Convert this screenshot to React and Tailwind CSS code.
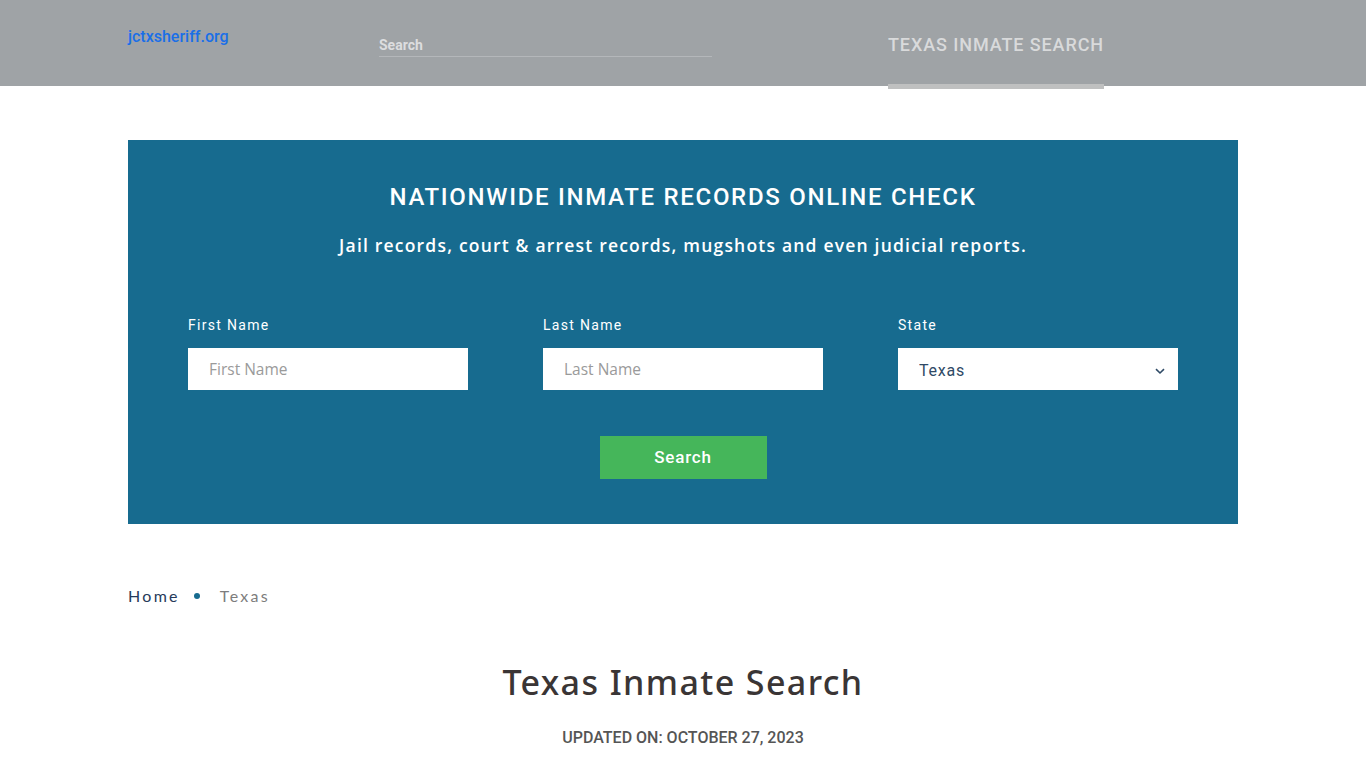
import React, { useState } from 'react';

function Header() {
  return (
    <header className="h-[86px] bg-[#9fa3a6]">
      <div className="mx-auto flex h-full w-[1110px] items-start">
        <a href="#" className="mt-[25px] w-[251px] font-['Roboto'] text-[16px] font-medium text-[#1a6fe8]">
          jctxsheriff.org
        </a>
        <div className="mt-[32px] w-[333px] border-b border-[#b4b7ba] pb-0">
          <input
            className="w-full bg-transparent font-['Roboto'] text-[14px] font-bold leading-[22px] text-[#dcdddf] placeholder-[#dcdddf] outline-none"
            placeholder="Search"
          />
        </div>
        <nav className="ml-[176px] flex h-full flex-col">
          <a href="#" className="mt-[31px] font-['Roboto'] text-[18px] font-medium tracking-[0.9px] text-[#d9dadb]">
            TEXAS INMATE SEARCH
          </a>
          <div className="mt-auto h-[5px] translate-y-[3px] bg-[#bfc0c0]" />
        </nav>
      </div>
    </header>
  );
}

function SearchPanel() {
  const [first, setFirst] = useState('');
  const [last, setLast] = useState('');

  return (
    <section className="mx-auto mt-[54px] w-[1110px] bg-[#176b8f] px-[60px] pb-[45px] pt-[39px]">
      <h2 className="text-center font-['Roboto'] text-[24px] font-medium tracking-[1.7px] text-white">
        NATIONWIDE INMATE RECORDS ONLINE CHECK
      </h2>
      <p className="mt-[17px] text-center font-['Open_Sans'] text-[17.5px] font-semibold tracking-[1.2px] text-white">
        Jail records, court &amp; arrest records, mugshots and even judicial reports.
      </p>

      <div className="mt-[57px] grid grid-cols-3 gap-x-[75px]">
        <div>
          <label className="block font-['Roboto'] text-[14px] tracking-[1.3px] text-white">First Name</label>
          <input
            value={first}
            onChange={(e) => setFirst(e.target.value)}
            placeholder="First Name"
            className="mt-[12px] h-[42px] w-[280px] bg-white px-[21px] font-['Open_Sans'] text-[15.5px] text-[#333] placeholder-[#9a9a9a] outline-none"
          />
        </div>
        <div>
          <label className="block font-['Roboto'] text-[14px] tracking-[1.3px] text-white">Last Name</label>
          <input
            value={last}
            onChange={(e) => setLast(e.target.value)}
            placeholder="Last Name"
            className="mt-[12px] h-[42px] w-[280px] bg-white px-[21px] font-['Open_Sans'] text-[15.5px] text-[#333] placeholder-[#9a9a9a] outline-none"
          />
        </div>
        <div>
          <label className="block font-['Roboto'] text-[14px] tracking-[1.3px] text-white">State</label>
          <div className="relative mt-[12px] h-[42px] w-[280px] bg-white">
            <select className="h-full w-full appearance-none bg-transparent px-[21px] pt-[4px] font-['Roboto'] text-[16px] tracking-[0.8px] text-[#2f4a66] outline-none">
              <option>Texas</option>
            </select>
            <svg className="pointer-events-none absolute right-[13px] top-[20px]" width="10" height="7" viewBox="0 0 10 7">
              <path d="M1 1.2 L5 5 L9 1.2" fill="none" stroke="#2f4a66" strokeWidth="1.6" />
            </svg>
          </div>
        </div>
      </div>

      <div className="mt-[46px] flex justify-center">
        <button className="h-[43px] w-[167px] bg-[#45b65a] font-['Roboto'] text-[17px] font-medium tracking-[0.8px] text-white">
          Search
        </button>
      </div>
    </section>
  );
}

export default function App() {
  return (
    <div className="min-h-screen bg-white">
      <Header />
      <SearchPanel />

      <div className="mx-auto mt-[60px] flex w-[1110px] items-center font-['Lato'] text-[16px] tracking-[2.3px]">
        <a href="#" className="text-[#263a5a]">Home</a>
        <span className="ml-[14px] mr-[20px] h-[6px] w-[6px] rounded-full bg-[#176b8f]" />
        <span className="text-[#7d7d7d]">Texas</span>
      </div>

      <h1 className="mt-[49px] text-center font-['Noto_Sans'] text-[34px] font-medium tracking-[1.4px] text-[#3a3535]">
        Texas Inmate Search
      </h1>
      <p className="mt-[18px] text-center font-['Roboto'] text-[16px] font-medium text-[#555]">
        UPDATED ON: OCTOBER 27, 2023
      </p>
    </div>
  );
}
